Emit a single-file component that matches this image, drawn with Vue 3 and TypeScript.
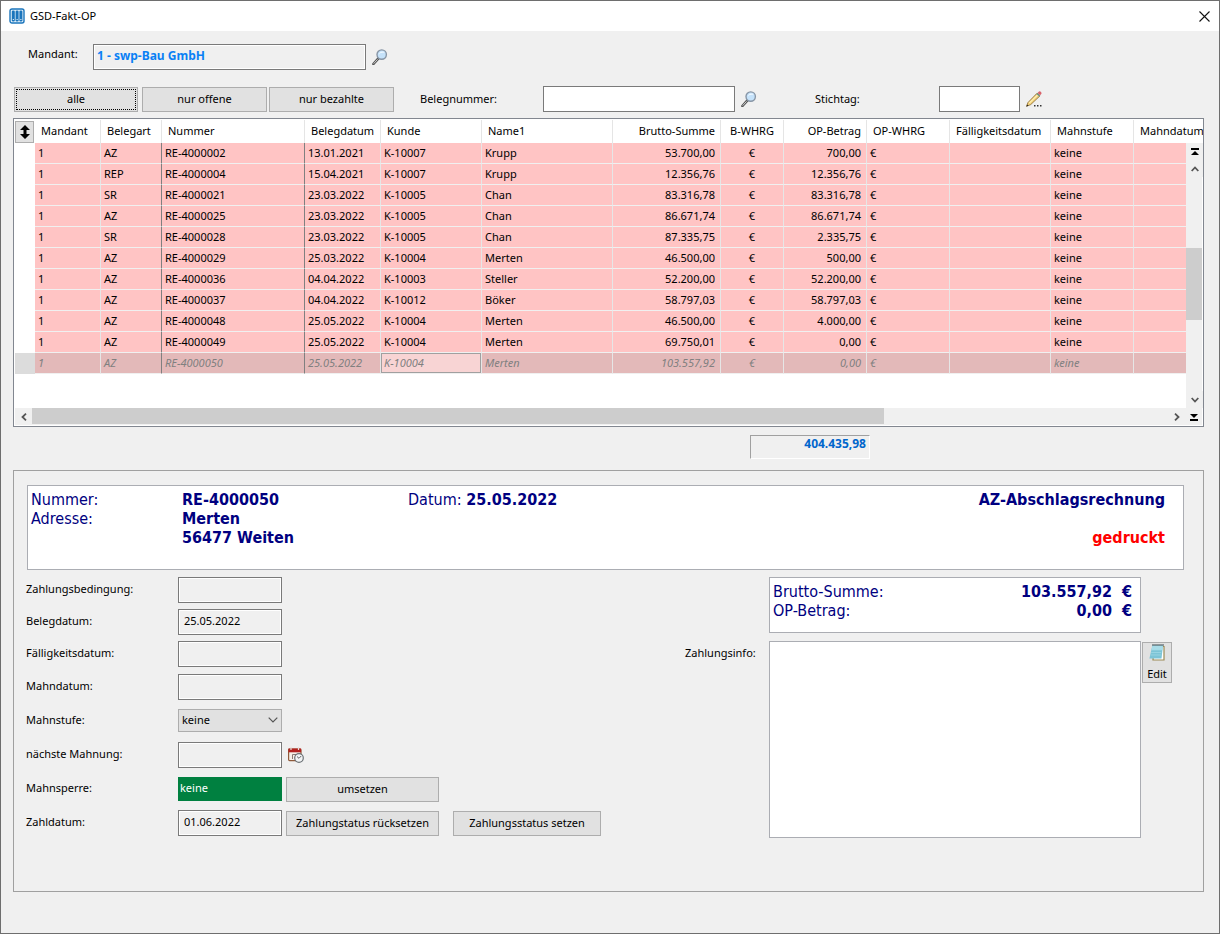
<script setup lang="ts">
import { ref } from 'vue'

interface OpenItem {
  mandant: string
  belegart: string
  nummer: string
  belegdatum: string
  kunde: string
  name: string
  brutto: string
  betrag: string
}

const columns: { label: string; cls: string }[] = [
  { label: 'Mandant', cls: 'c-mandant' },
  { label: 'Belegart', cls: 'c-art' },
  { label: 'Nummer', cls: 'c-nummer' },
  { label: 'Belegdatum', cls: 'c-datum' },
  { label: 'Kunde', cls: 'c-kunde' },
  { label: 'Name1', cls: 'c-name' },
  { label: 'Brutto-Summe', cls: 'c-brutto num' },
  { label: 'B-WHRG', cls: 'c-bw mid' },
  { label: 'OP-Betrag', cls: 'c-op num' },
  { label: 'OP-WHRG', cls: 'c-ow' },
  { label: 'Fälligkeitsdatum', cls: 'c-faellig' },
  { label: 'Mahnstufe', cls: 'c-stufe' },
  { label: 'Mahndatum', cls: 'c-mahn' },
]

function item(belegart: string, nr: string, belegdatum: string, kd: string, name: string, brutto: string, betrag: string): OpenItem {
  return { mandant: '1', belegart, nummer: 'RE-40000' + nr, belegdatum, kunde: 'K-100' + kd, name, brutto, betrag }
}

const items: OpenItem[] = [
  item('AZ', '02', '13.01.2021', '07', 'Krupp', '53.700,00', '700,00'),
  item('REP', '04', '15.04.2021', '07', 'Krupp', '12.356,76', '12.356,76'),
  item('SR', '21', '23.03.2022', '05', 'Chan', '83.316,78', '83.316,78'),
  item('AZ', '25', '23.03.2022', '05', 'Chan', '86.671,74', '86.671,74'),
  item('SR', '28', '23.03.2022', '05', 'Chan', '87.335,75', '2.335,75'),
  item('AZ', '29', '25.03.2022', '04', 'Merten', '46.500,00', '500,00'),
  item('AZ', '36', '04.04.2022', '03', 'Steller', '52.200,00', '52.200,00'),
  item('AZ', '37', '04.04.2022', '12', 'Böker', '58.797,03', '58.797,03'),
  item('AZ', '48', '25.05.2022', '04', 'Merten', '46.500,00', '4.000,00'),
  item('AZ', '49', '25.05.2022', '04', 'Merten', '69.750,01', '0,00'),
  item('AZ', '50', '25.05.2022', '04', 'Merten', '103.557,92', '0,00'),
]

const selected = ref(items.length - 1)
const filter = ref('alle')
const filters = ['alle', 'nur offene', 'nur bezahlte']
const belegnummer = ref('')
const stichtag = ref('')
const mahnstufe = ref('keine')
const info = ref('')
</script>

<template>
  <div class="window">
    <header class="titlebar">
      <svg class="logo" viewBox="0 0 16 16" width="16" height="16" aria-hidden="true">
        <rect x="1" y="1" width="14" height="14" rx="2" fill="#e4f1fa" stroke="#1b75bc" stroke-width="1.4" />
        <rect x="2.8" y="2.5" width="3" height="11" rx="1.2" fill="#1b75bc" />
        <rect x="6.6" y="2.5" width="3" height="11" rx="1.2" fill="#1b75bc" />
        <rect x="10.4" y="2.5" width="3" height="11" rx="1.2" fill="#1b75bc" />
        <path d="M3.8 11.5h1M7.6 11.5h1M11.4 11.5h1" stroke="#fff" stroke-width="1" />
      </svg>
      <span class="title">GSD-Fakt-OP</span>
      <button class="close" type="button" aria-label="Schließen">
        <svg viewBox="0 0 11 11" width="11" height="11"><path d="M.5 .5l10 10M10.5 .5l-10 10" stroke="#111" stroke-width="1.1" /></svg>
      </button>
    </header>

    <main class="content">
      <div class="mandant-row">
        <label for="mandant">Mandant:</label>
        <input id="mandant" class="field mandant" value="1 - swp-Bau GmbH" readonly />
        <button class="icon-btn" type="button" aria-label="Mandant suchen">
          <svg viewBox="0 0 16 16" width="16" height="16">
            <path d="M6.2 9.6L1.4 15" stroke="#555" stroke-width="2.6" stroke-linecap="round" />
            <path d="M5.6 10.3L1.6 14.7" stroke="#c9c9c9" stroke-width="1" />
            <circle cx="9.7" cy="5.6" r="4.7" fill="#c5e2fa" stroke="#8795a5" stroke-width="1.4" />
            <path d="M6.8 6c1-3 4-2 5.8-2.600A3.500 3.500 0 0 0 6.800 6z" fill="#eff8ff" />
          </svg>
        </button>
      </div>

      <div class="filter-row">
        <div class="filters">
          <button v-for="f in filters" :key="f" type="button" class="btn" :class="{ focus: f === filter }" @click="filter = f">{{ f }}</button>
        </div>
        <label class="l-beleg" for="beleg">Belegnummer:</label>
        <input id="beleg" v-model="belegnummer" class="field plain beleg" />
        <button class="icon-btn" type="button" aria-label="Beleg suchen">
          <svg viewBox="0 0 16 16" width="16" height="16">
            <path d="M6.2 9.6L1.4 15" stroke="#555" stroke-width="2.6" stroke-linecap="round" />
            <path d="M5.6 10.3L1.6 14.7" stroke="#c9c9c9" stroke-width="1" />
            <circle cx="9.7" cy="5.6" r="4.7" fill="#c5e2fa" stroke="#8795a5" stroke-width="1.4" />
            <path d="M6.8 6c1-3 4-2 5.8-2.600A3.500 3.500 0 0 0 6.800 6z" fill="#eff8ff" />
          </svg>
        </button>
        <label class="l-stich" for="stichtag">Stichtag:</label>
        <input id="stichtag" v-model="stichtag" class="field plain stichtag" />
        <button class="icon-btn" type="button" aria-label="Stichtag bearbeiten">
          <svg viewBox="0 0 16 16" width="16" height="16">
            <path d="M.5 15.300L2 11.500 11 2.300 14 4.800 4.700 13.600z" fill="#f3d27a" stroke="#86652a" stroke-width=".8" />
            <path d="M3.200 12.200L12 3.500" stroke="#fff1b8" stroke-width="1.100" />
            <path d="M10.200 3l3 2.600 1.200-1.200-3-2.500z" fill="#6f9a86" />
            <path d="M11.500 1.900L13 .5c1-.6 3 1 2.400 2.200l-1.200 1.600z" fill="#d9636b" />
            <path d="M.4 15.500l.8-2 1.300 1.200z" fill="#222" />
            <path d="M8 14h1.500v1.500H8zM11 14h1.500v1.500H11zM14 14h1.500v1.500H14z" fill="#333" />
          </svg>
        </button>
      </div>

      <section class="grid-box">
        <table class="items">
          <thead>
            <tr>
              <th class="c-gutter">
                <button class="sorter" type="button" aria-label="Sortieren">
                  <svg viewBox="0 0 10 14" width="10" height="14"><path d="M5 0l5 5H6.500v4H10l-5 5-5-5h3.500V5H0z" fill="#000" /></svg>
                </button>
              </th>
              <th v-for="c in columns" :key="c.label" :class="c.cls">{{ c.label }}</th>
            </tr>
          </thead>
          <tbody>
            <tr v-for="(r, i) in items" :key="r.nummer" :class="{ selected: i === selected }" @click="selected = i">
              <td class="gutter"></td>
              <td>{{ r.mandant }}</td>
              <td class="dark">{{ r.belegart }}</td>
              <td class="dark">{{ r.nummer }}</td>
              <td>{{ r.belegdatum }}</td>
              <td class="kunde">{{ r.kunde }}</td>
              <td>{{ r.name }}</td>
              <td class="num">{{ r.brutto }}</td>
              <td class="mid">€</td>
              <td class="num">{{ r.betrag }}</td>
              <td>€</td>
              <td></td>
              <td>keine</td>
              <td></td>
            </tr>
          </tbody>
        </table>
        <div class="vbar">
          <button type="button" aria-label="Zum Anfang">
            <svg viewBox="0 0 8 8" width="8" height="8"><path d="M0 0h8v2H0zM4 3l4 4H0z" fill="#000" /></svg>
          </button>
          <button type="button" aria-label="Nach oben">
            <svg viewBox="0 0 8 6" width="8" height="6"><path d="M.7 5L4 1.500 7.300 5" fill="none" stroke="#555" stroke-width="1.800" /></svg>
          </button>
          <div class="vtrack"><div class="vthumb"></div></div>
          <button type="button" aria-label="Nach unten">
            <svg viewBox="0 0 8 6" width="8" height="6"><path d="M.7 1L4 4.500 7.300 1" fill="none" stroke="#555" stroke-width="1.800" /></svg>
          </button>
        </div>
        <div class="hbar">
          <button type="button" aria-label="Nach links">
            <svg viewBox="0 0 6 8" width="6" height="8"><path d="M5 .7L1.500 4 5 7.300" fill="none" stroke="#555" stroke-width="1.800" /></svg>
          </button>
          <div class="htrack"><div class="hthumb"></div></div>
          <button type="button" aria-label="Nach rechts">
            <svg viewBox="0 0 6 8" width="6" height="8"><path d="M1 .7L4.500 4 1 7.300" fill="none" stroke="#555" stroke-width="1.800" /></svg>
          </button>
          <button type="button" aria-label="Zum Ende">
            <svg viewBox="0 0 8 8" width="8" height="8"><path d="M0 6h8v2H0zM4 5l4-4H0z" fill="#000" /></svg>
          </button>
        </div>
      </section>

      <div class="sum-row"><output class="sum">404.435,98</output></div>

      <section class="detail">
        <div class="card head">
          <span>Nummer:</span><b>RE-4000050</b>
          <span class="date">Datum: <b>25.05.2022</b></span>
          <b class="right">AZ-Abschlagsrechnung</b>
          <span>Adresse:</span><b class="addr">Merten<br />56477 Weiten</b>
          <b class="right red">gedruckt</b>
        </div>

        <div class="lower">
          <div class="form">
            <label for="f1">Zahlungsbedingung:</label>
            <input id="f1" class="field" readonly />
            <label for="f2">Belegdatum:</label>
            <input id="f2" class="field" value="25.05.2022" readonly />
            <label for="f3">Fälligkeitsdatum:</label>
            <input id="f3" class="field" readonly />
            <label for="f4">Mahndatum:</label>
            <input id="f4" class="field" readonly />
            <label for="f5">Mahnstufe:</label>
            <div class="select">
              <select id="f5" v-model="mahnstufe">
                <option>keine</option>
              </select>
              <svg viewBox="0 0 10 6" width="10" height="6"><path d="M.7 .7L5 5 9.300 .7" fill="none" stroke="#555" stroke-width="1.200" /></svg>
            </div>
            <label for="f6">nächste Mahnung:</label>
            <input id="f6" class="field" readonly />
            <div class="actions">
              <button class="icon-btn" type="button" aria-label="Datum wählen">
                <svg viewBox="0 0 16 16" width="16" height="16">
                  <rect x=".6" y="2" width="12.400" height="11.600" rx="1" fill="#f6f0e8" stroke="#8f5a3a" stroke-width="1.200" />
                  <path d="M.5 1.500h12.600v3.800H.5z" fill="#b3211f" />
                  <path d="M3 0v3M10.500 0v3" stroke="#e9dcd8" stroke-width="1.200" />
                  <path d="M4.500 12V7.500h4v3h-2" fill="none" stroke="#8a7a74" stroke-width="1" />
                  <circle cx="11" cy="11" r="4.300" fill="#f2f4f5" stroke="#6c7276" stroke-width="1.200" />
                  <path d="M9 9.500L11 11.300 13.200 9" fill="none" stroke="#555" stroke-width=".9" />
                </svg>
              </button>
            </div>
            <label for="f7">Mahnsperre:</label>
            <input id="f7" class="sperre" value="keine" readonly />
            <div class="actions"><button class="btn wide" type="button">umsetzen</button></div>
            <label for="f8">Zahldatum:</label>
            <input id="f8" class="field" value="01.06.2022" readonly />
            <div class="actions">
              <button class="btn wide" type="button">Zahlungstatus rücksetzen</button>
              <button class="btn set" type="button">Zahlungsstatus setzen</button>
            </div>
          </div>

          <div class="side">
            <div class="card totals">
              <span>Brutto-Summe:</span><b>103.557,92</b><b>€</b>
              <span>OP-Betrag:</span><b>0,00</b><b>€</b>
            </div>
            <label class="l-info" for="info">Zahlungsinfo:</label>
            <textarea id="info" v-model="info"></textarea>
            <button class="btn edit" type="button">
              <svg viewBox="0 0 16 17" width="16" height="17">
                <path d="M5 2.500h10v13.500H4z" fill="#fff" stroke="#9b8a55" stroke-width="1.200" />
                <path d="M3.400 1.500H14L12.500 14.500H.4z" fill="#7cc4d6" />
                <path d="M3.400 1.500H14l-.5 4.500H2.400z" fill="#a9dce8" />
                <path d="M2.600 6h10M2.200 8.500h10M1.700 11h10" stroke="#9fd8e4" stroke-width=".8" />
                <path d="M4 0v2M6 0v2M8 0v2M10 0v2M12 0v2M14 0v2" stroke="#3c4a50" stroke-width="1" />
              </svg>
              Edit
            </button>
          </div>
        </div>
      </section>
    </main>
  </div>
</template>

<style>
body {
  margin: 0;
  background: #f0f0f0;
}
</style>

<style scoped>
.window {
  box-sizing: border-box;
  min-height: 100vh;
  border: 1px solid #6e6e6e;
  background: #f0f0f0;
  font: 11px/16px 'Noto Sans', 'Open Sans', sans-serif;
  color: #000;
}
.window *,
.window *::before {
  box-sizing: border-box;
}
button,
input,
select,
textarea {
  margin: 0;
  padding: 0;
  border-radius: 0;
  font: inherit;
  color: inherit;
}
svg {
  display: block;
  flex: none;
}
.titlebar {
  display: flex;
  align-items: center;
  height: 30px;
  padding: 0 9px 0 8px;
  background: #fff;
}
.title {
  flex: 1;
  margin-left: 5px;
}
.close,
.icon-btn {
  border: 0;
  background: none;
}
.content {
  padding: 13px 15px 40px 12px;
}
.mandant-row {
  display: flex;
  align-items: center;
  padding-left: 15px;
}
.mandant-row label {
  width: 65px;
  padding-bottom: 6px;
}
.field {
  width: 104px;
  height: 26px;
  padding: 0 5px 4px;
  border: 1px solid #7a7a7a;
  background: #f0f0f0;
  box-shadow: inset 0 0 0 1px #fff;
}
.plain {
  background: #fff;
}
.mandant {
  width: 273px;
  padding-left: 3px;
  color: #0a80f5;
  font-size: 12px;
  font-weight: 700;
}
.icon-btn {
  margin-left: 6px;
}
.filter-row {
  display: flex;
  align-items: center;
  margin: 16px 0 6px;
}
.filters {
  display: flex;
  gap: 2px;
  padding-left: 1px;
}
.btn {
  height: 25px;
  border: 1px solid #adadad;
  background: #e1e1e1;
}
.filters .btn {
  width: 125px;
}
.filters .focus {
  width: 124px;
  margin-right: 2px;
  outline: 1px dotted #000;
  outline-offset: -3px;
}
.l-beleg {
  width: 123px;
  margin-left: 26px;
}
.beleg {
  width: 192px;
}
.l-stich {
  width: 124px;
  margin-left: 58px;
}
.stichtag {
  width: 81px;
}
.grid-box {
  display: grid;
  grid-template-columns: minmax(0, 1fr) 16px;
  grid-template-rows: 23px 265px 17px;
  padding: 1px;
  border: 1px solid #828790;
  background: #fff;
  overflow: hidden;
}
.items {
  grid-area: 1 / 1 / 3 / 3;
  align-self: start;
  width: 100%;
  table-layout: fixed;
  border-collapse: separate;
  border-spacing: 0;
}
.items th {
  height: 23px;
  padding: 0 5px 2px 6px;
  border-right: 1px solid #e5e5e5;
  font-weight: 400;
  text-align: left;
  white-space: nowrap;
}
.items .c-gutter {
  width: 20px;
  padding: 0;
  border: 0;
}
.items .c-mahn {
  border: 0;
  padding-right: 0;
}
.c-mandant { width: 66px; }
.c-art { width: 61px; }
.c-nummer { width: 143px; }
.c-datum { width: 76px; }
.c-kunde { width: 101px; }
.c-name { width: 131px; }
.c-brutto { width: 108px; }
.c-bw { width: 63px; }
.c-op { width: 83px; }
.c-ow { width: 83px; }
.c-faellig { width: 101px; }
.c-stufe { width: 83px; }
.sorter {
  display: grid;
  place-items: center;
  width: 19px;
  height: 22px;
  border: 1px solid #adadad;
  background: #e1e1e1;
}
.items td {
  height: 21px;
  padding: 0 5px 0 3px;
  border-right: 1px solid #e6e6e6;
  border-bottom: 1px solid #f0f0f0;
  background: #ffc4c4;
  white-space: nowrap;
}
.items td.dark {
  border-right-color: #808080;
}
.items td.gutter {
  padding: 0;
  border: 0;
  background: #fff;
}
.items .num {
  text-align: right;
}
.items .mid {
  padding-left: 0;
  padding-right: 0;
  text-align: center;
}
.items .selected td {
  background: #e3b9b9;
  color: #808080;
  font-style: italic;
}
.items .selected td.gutter {
  background: #dcdcdc;
}
.items .selected td.kunde {
  background: #f8d4d4;
  box-shadow: inset 0 0 0 1px #a0a0a0;
}
.vbar {
  grid-area: 2 / 2;
  display: flex;
  flex-direction: column;
  background: #f0f0f0;
}
.vbar button,
.hbar button {
  display: grid;
  place-items: center;
  width: 17px;
  height: 17px;
  border: 0;
  background: #f0f0f0;
}
.vtrack {
  flex: 1;
  display: grid;
  grid-template-rows: 1fr 1fr 1fr;
}
.vthumb {
  grid-row: 2;
  background: #cdcdcd;
}
.hbar {
  grid-area: 3 / 1 / 4 / 3;
  display: flex;
  background: #f0f0f0;
}
.htrack {
  flex: 1;
}
.hthumb {
  width: 75%;
  height: 16px;
  background: #cdcdcd;
}
.sum-row {
  display: flex;
  justify-content: flex-end;
  margin: 8px 334px 11px 0;
}
.sum {
  width: 120px;
  height: 24px;
  padding: 0 3px;
  border: 1px solid;
  border-color: #a0a0a0 #fff #fff #a0a0a0;
  color: #06c;
  font-size: 12px;
  font-weight: 700;
  text-align: right;
}
.detail {
  min-height: 422px;
  padding: 14px 19px 14px 13px;
  border: 1px solid #a0a0a0;
}
.card {
  border: 1px solid #abadb3;
  background: #fff;
  color: #000080;
  font: 16px/19px 'DejaVu Sans Condensed', 'DejaVu Sans', sans-serif;
}
.head {
  display: grid;
  grid-template-columns: 151px 226px 1fr auto;
  grid-template-rows: 19px 19px 19px;
  height: 85px;
  padding: 4px 18px 0 3px;
}
.addr {
  grid-area: 2 / 2 / 4 / 3;
}
.head .right {
  grid-column: 4;
  text-align: right;
}
.head .red {
  grid-row: 3;
  color: #f00;
}
.lower {
  display: flex;
  justify-content: space-between;
  margin-top: 3px;
}
.form {
  display: grid;
  grid-template-columns: 152px 104px 1fr;
  grid-template-rows: repeat(3, 32px) repeat(5, 34px);
  align-items: center;
  margin-left: -1px;
}
.form > label {
  grid-column: 1;
}
.form > .field,
.sperre,
.form .actions {
  margin-top: 2px;
}
.sperre {
  width: 104px;
  height: 24px;
  padding: 0 2px 4px;
  border: 0;
  background: #008040;
  color: #fff;
}
.select {
  display: grid;
  align-items: center;
}
.select > * {
  grid-area: 1 / 1;
}
.select select {
  appearance: none;
  height: 23px;
  padding: 0 3px;
  border: 1px solid #adadad;
  background: #e1e1e1;
}
.select svg {
  justify-self: end;
  margin-right: 4px;
  pointer-events: none;
}
.actions {
  display: flex;
  gap: 14px;
  padding-left: 4px;
}
.actions .icon-btn {
  margin-left: 2px;
}
.wide {
  width: 153px;
}
.set {
  width: 148px;
}
.side {
  display: grid;
  grid-template-columns: 84px 372px 31px;
  grid-template-rows: 56px 197px;
  row-gap: 8px;
  margin: 4px 12px 0 0;
}
.totals {
  grid-column: 2;
  display: grid;
  grid-template-columns: 1fr auto auto;
  grid-auto-rows: 19px;
  column-gap: 10px;
  padding: 4px 8px 0 3px;
}
.totals b {
  text-align: right;
}
.l-info {
  grid-column: 1;
  padding-top: 4px;
}
textarea {
  border: 1px solid #abadb3;
  background: #fff;
  resize: none;
}
.edit {
  display: flex;
  flex-direction: column;
  align-items: center;
  justify-content: space-between;
  width: 30px;
  height: 41px;
  margin: 1px 0 0 1px;
  padding-top: 1px;
}
</style>
